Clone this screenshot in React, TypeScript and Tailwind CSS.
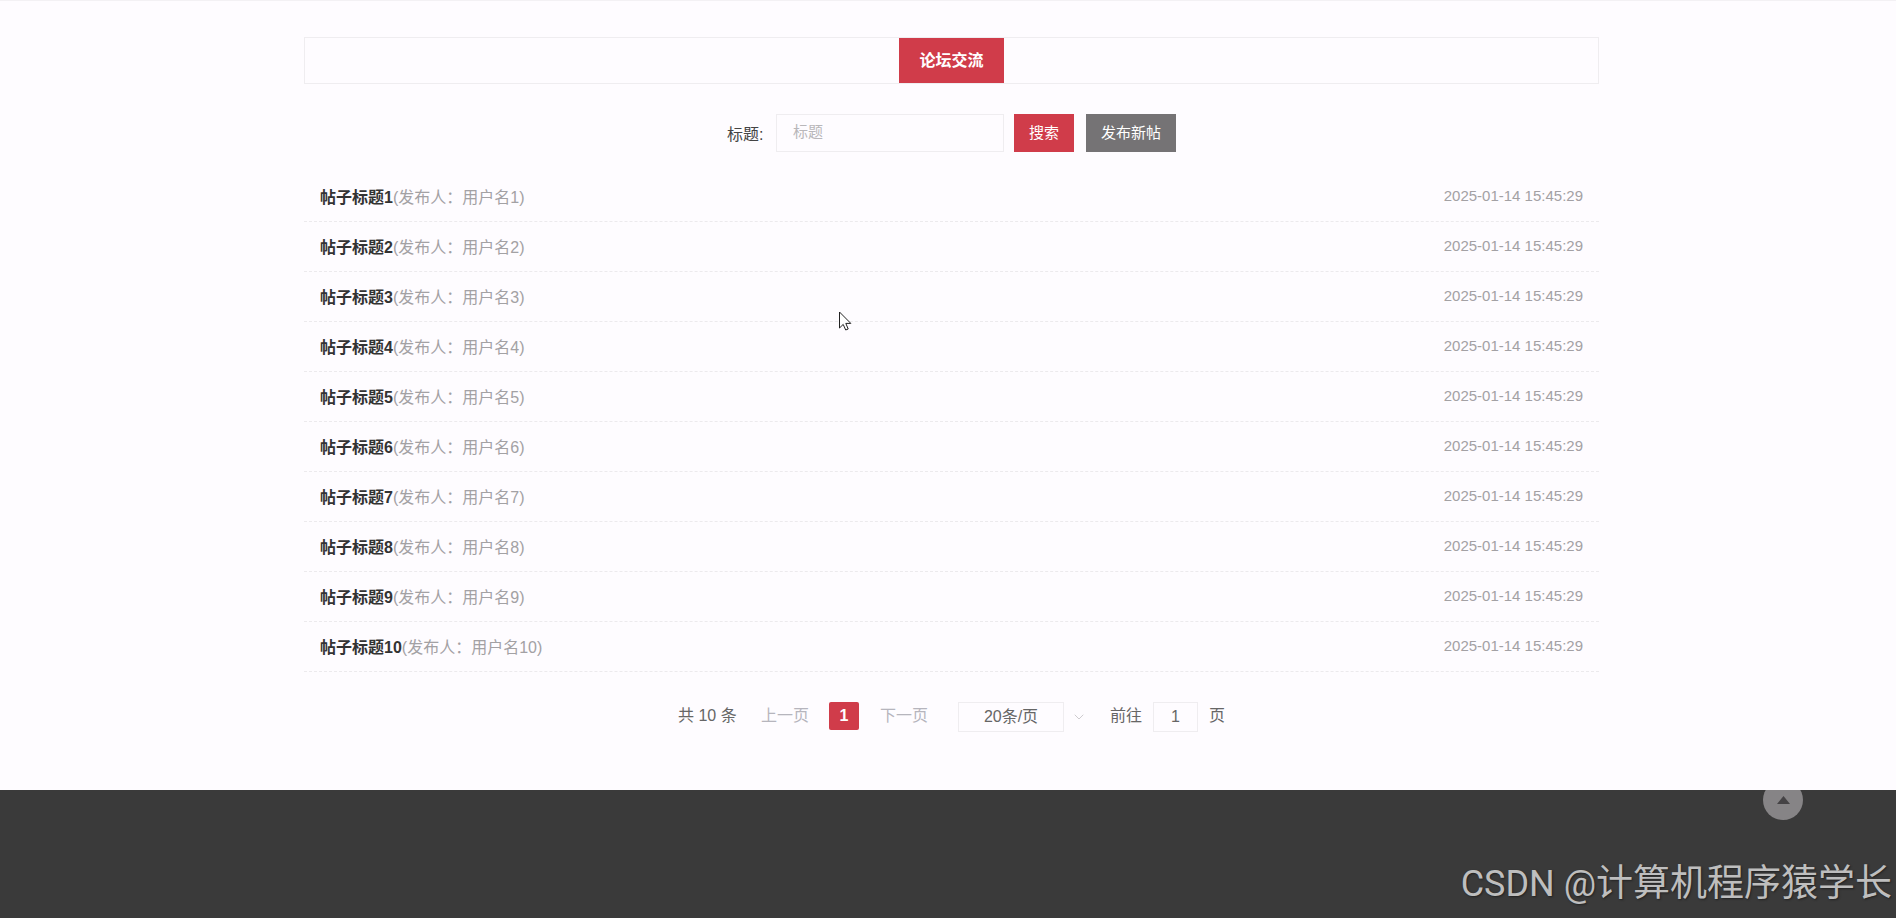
import { useState } from "react";
import { clsx } from "clsx";
import { ChevronDown } from "lucide-react";

const posts = Array.from({ length: 10 }, (_, i) => ({
  id: i + 1,
  title: `帖子标题${i + 1}`,
  author: `用户名${i + 1}`,
  time: "2025-01-14 15:45:29",
}));

const SearchBar = () => {
  const [title, setTitle] = useState("");

  return (
    <form
      className="mt-[30px] flex h-[38px] items-stretch justify-center"
      onSubmit={(e) => e.preventDefault()}
    >
      <label htmlFor="title" className="w-[49px] pt-1 text-base leading-[34px] text-[#444]">
        标题:
      </label>
      <input
        id="title"
        type="text"
        placeholder="标题"
        value={title}
        onChange={(e) => setTitle(e.target.value)}
        className="w-[228px] border border-[#efedf0] bg-transparent px-4 pb-0.5 text-[15px] text-[#444] outline-none placeholder:text-[#b9b7ba]"
      />
      <button type="submit" className="ml-[10px] bg-[#d03c4a] px-[15px] text-[15px] text-white">
        搜索
      </button>
      <button type="button" className="ml-3 bg-[#757375] px-[15px] text-[15px] text-white">
        发布新帖
      </button>
    </form>
  );
};

const PostList = () => (
  <ul className="mt-5">
    {posts.map((post) => (
      <li
        key={post.id}
        className="flex h-[50px] items-center justify-between border-b border-dashed border-[#eceaed] px-4"
      >
        <a href={`#post-${post.id}`} className="pt-0.5 text-base text-[#a3a1a4]">
          <b className="font-bold text-[#333]">{post.title}</b>
          (发布人：{post.author})
        </a>
        <time className="text-[15px] text-[#a3a1a4]">{post.time}</time>
      </li>
    ))}
  </ul>
);

const Pagination = () => {
  const [page, setPage] = useState("1");

  return (
    <nav className="mt-[30px] flex h-[30px] items-start justify-center text-base leading-7 text-[#666]">
      <span className="w-[60px] whitespace-nowrap">共 10 条</span>
      <button type="button" disabled className="ml-[23px] text-[#b6b5bd]">
        上一页
      </button>
      <button
        type="button"
        aria-current="page"
        className="ml-5 h-7 w-[30px] rounded-xs bg-[#d03c4a] font-bold text-white"
      >
        1
      </button>
      <button type="button" disabled className="ml-[21px] text-[#b6b5bd]">
        下一页
      </button>
      <select
        aria-label="每页条数"
        defaultValue="20"
        className="ml-[30px] h-[30px] w-[106px] appearance-none border border-[#efedf0] bg-transparent text-center [text-align-last:center] outline-none"
      >
        <option value="10">10条/页</option>
        <option value="20">20条/页</option>
        <option value="50">50条/页</option>
      </select>
      <ChevronDown className="ml-[7px] mt-[7px] size-4 text-[#c4c2c5]" strokeWidth={1.25} />
      <label htmlFor="page" className="ml-[23px]">
        前往
      </label>
      <input
        id="page"
        type="text"
        value={page}
        onChange={(e) => setPage(e.target.value)}
        className="mx-[11px] h-[30px] w-[45px] border border-[#efedf0] bg-transparent text-center outline-none"
      />
      <span>页</span>
    </nav>
  );
};

const Cursor = () => (
  <svg
    className="pointer-events-none absolute left-[839px] top-[311px]"
    width="13"
    height="20"
    viewBox="0 0 13 20"
    aria-hidden="true"
  >
    <path
      d="M.5 1v16l3.7-3.6L6.7 19l2.5-1-2.4-5.6h5z"
      fill="#fff"
      stroke="#222"
      strokeWidth="1"
    />
  </svg>
);

const tabs = [{ name: "论坛交流", active: true }];

export default function App() {
  return (
    <div
      className={clsx(
        "relative flex min-h-screen flex-col bg-[#fefcff]",
        "font-['Liberation_Sans','Noto_Sans_CJK_SC',sans-serif]",
      )}
    >
      <main className="border-t border-[#f3f1f4] pb-[58px] pl-[7px] pt-9">
        <div className="mx-auto w-full max-w-[1295px]">
          <h1 className="flex justify-center border border-[#efedf0]">
            {tabs.map((tab) => (
              <span
                key={tab.name}
                className={clsx(
                  "px-5 text-base font-bold leading-[45px]",
                  tab.active && "bg-[#d03c4a] text-white",
                )}
              >
                {tab.name}
              </span>
            ))}
          </h1>
          <SearchBar />
          <PostList />
          <Pagination />
        </div>
      </main>

      <footer className="relative flex grow items-end justify-end overflow-hidden bg-[#3a3a3a]">
        {/* Кнопка "вгору" */}
        <button
          type="button"
          aria-label="返回顶部"
          className="absolute -top-[10px] right-[93px] flex size-10 items-center justify-center rounded-full bg-[#868486]"
        >
          <svg width="13" height="8" viewBox="0 0 13 8" aria-hidden="true">
            <path d="M0 8 6.5 0 13 8z" fill="#454345" />
          </svg>
        </button>
        <p className="whitespace-nowrap pb-2 pr-1 font-['Noto_Sans_CJK_SC',sans-serif] text-[37px] leading-[52px] text-[#bebebe] [text-shadow:1px_1px_2px_#222]">
          <span className="font-[Roboto,sans-serif] text-4xl leading-[52px]">CSDN @</span>
          计算机程序猿学长
        </p>
      </footer>

      <Cursor />
    </div>
  );
}
